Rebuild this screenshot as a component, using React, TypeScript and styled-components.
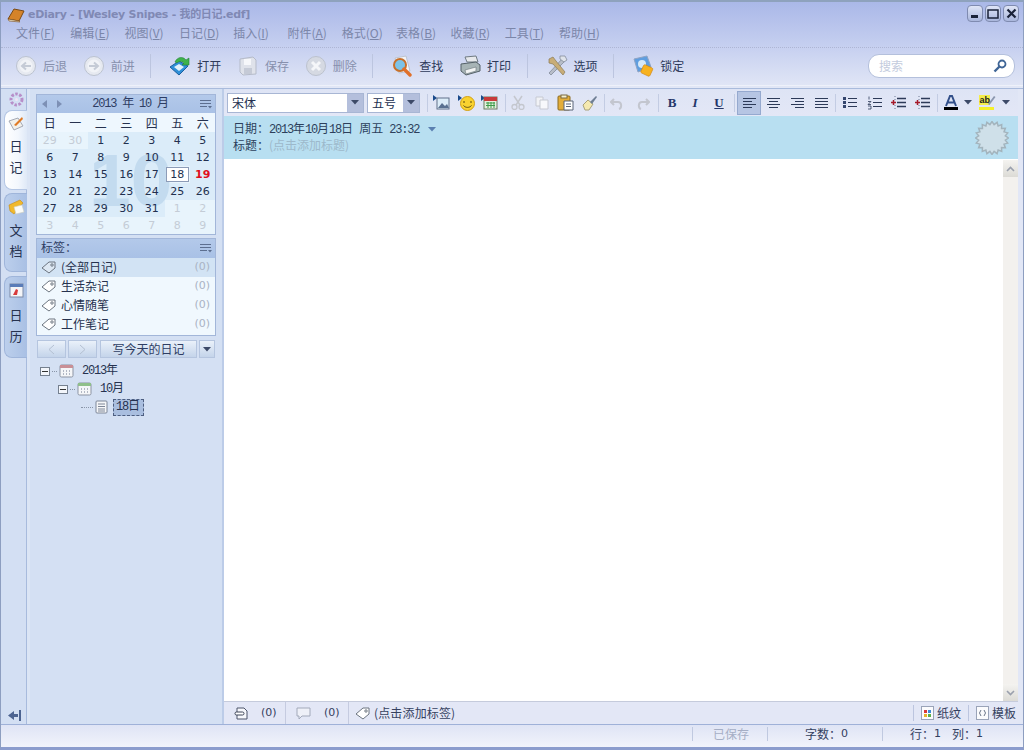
import React from "react";
import styled, { createGlobalStyle } from "styled-components";

const CJK = `"Noto Sans CJK SC", "Liberation Sans", sans-serif`;
const LATIN = `"DejaVu Sans", "Noto Sans CJK SC", sans-serif`;
const MONO = `"Liberation Mono", "Noto Sans CJK SC", monospace`;
const COLON = "\uFF1A";

const Global = createGlobalStyle`
  html, body { margin: 0; padding: 0; background: #fff; }
  * { box-sizing: border-box; }
`;

const S = {
  Window: styled.div`
    width: 1024px;
    height: 750px;
    display: flex;
    flex-direction: column;
    overflow: hidden;
    font: 12px/16px ${CJK};
    color: #2c3a5c;
    border: 1px solid #8d9ec0;
    border-top: 2px solid #8ea2bd;
    border-bottom: 3px solid #8b9ccd;
    background: linear-gradient(#aab8e8 0, #c3cdef 40px, #e2e7f6 86px, #e2e7f6 100%);
  `,
  Glyph: styled.svg`
    display: block;
    flex: none;
  `,
  TitleBar: styled.div`
    height: 23px;
    flex: none;
    display: flex;
    align-items: center;
    padding: 3px 4px 0 6px;
  `,
  Title: styled.div`
    margin-left: 3px;
    font: bold 11px/16px ${LATIN};
    letter-spacing: -0.3px;
    color: #8089b4;
  `,
  WinButtons: styled.div`
    margin-left: auto;
    margin-top: -3px;
    display: flex;
    gap: 2px;
  `,
  WinButton: styled.div`
    width: 16px;
    height: 17px;
    display: flex;
    align-items: center;
    justify-content: center;
    border: 1px solid #7f8bb0;
    border-radius: 4px;
    background: linear-gradient(#dfe5f7, #a9b6dc);
  `,
  MenuBar: styled.div`
    height: 23px;
    flex: none;
    display: flex;
    align-items: center;
    padding: 0 0 6px 15px;
    border-bottom: 1px dotted #aeb6d4;
  `,
  MenuItem: styled.div`
    width: 54.3px;
    flex: none;
    color: #7b86a9;
    u { text-underline-offset: 1px; }
  `,
  Toolbar: styled.div`
    height: 38px;
    flex: none;
    display: flex;
    align-items: center;
    padding: 0 0 2px 14px;
    border-bottom: 1px solid #eef1fa;
  `,
  ToolButton: styled.div<{ $off?: boolean }>`
    width: 67.67px;
    flex: none;
    display: flex;
    align-items: center;
    gap: 6px;
    color: ${(p) => (p.$off ? "#8790ad" : "#2e3a5a")};
  `,
  ToolSep: styled.div`
    width: 1px;
    height: 24px;
    flex: none;
    margin-right: 18px;
    background: #bcc5df;
  `,
  SearchBox: styled.div`
    margin-left: auto;
    margin-right: 8px;
    width: 147px;
    height: 24px;
    flex: none;
    display: flex;
    align-items: center;
    justify-content: space-between;
    padding: 0 7px 0 10px;
    color: #c3cbdd;
    background: #fff;
    border: 1px solid #b4c0dc;
    border-radius: 11px;
  `,
  Body: styled.div`
    height: 637px;
    flex: none;
    margin-top: 2px;
    display: flex;
    border-top: 1px solid #a9bbdc;
    border-bottom: 1px solid #9fb1d8;
  `,
  TabStrip: styled.div`
    width: 29px;
    flex: none;
    display: flex;
    flex-direction: column;
    align-items: flex-end;
    position: relative;
    background: #d3dff3;
    border-right: 3px solid #dbe5f5;
    box-shadow: inset -1px 0 0 #a8bbdd;
  `,
  Flower: styled.div`
    width: 24px;
    height: 21px;
    flex: none;
    display: flex;
    justify-content: center;
    align-items: center;
    margin-right: -1px;
  `,
  Tab: styled.div<{ $active?: boolean; $h: number; $mb: number }>`
    width: 23px;
    height: ${(p) => p.$h}px;
    flex: none;
    margin-bottom: ${(p) => p.$mb}px;
    padding-top: 1px;
    display: flex;
    flex-direction: column;
    align-items: center;
    font-size: 13px;
    line-height: 20.5px;
    border-radius: 8px 0 0 8px;
    border: 1px solid ${(p) => (p.$active ? "#b4c6e4" : "#9fb5da")};
    border-right: 0;
    background: ${(p) => (p.$active ? "linear-gradient(90deg,#fff,#f3f7fd 60%,#dfe9f7)" : "linear-gradient(90deg,#bccfec,#a9c0e4)")};
    color: #26324f;
  `,
  TabIcon: styled.div<{ $mb: number }>`
    height: 24px;
    flex: none;
    margin-bottom: ${(p) => p.$mb}px;
    display: flex;
    align-items: center;
  `,
  Collapse: styled.div`
    position: absolute;
    left: 7px;
    bottom: 3px;
  `,
  Side: styled.div`
    width: 194px;
    flex: none;
    padding: 5px 6px 0;
    background: #d4e0f3;
    border-right: 2px solid #bccce8;
  `,
  Calendar: styled.div`
    position: relative;
    height: 141px;
    overflow: hidden;
    border: 1px solid #a2b6d9;
    background: #e8f4fc;
  `,
  CalHeader: styled.div`
    height: 18px;
    display: flex;
    align-items: center;
    justify-content: center;
    position: relative;
    padding-left: 8px;
    font: 12px/16px ${MONO};
    letter-spacing: -1.2px;
    color: #2e3d63;
    background: linear-gradient(#b3c9ea, #a9c1e6);
  `,
  CalNav: styled.div`
    position: absolute;
    left: 5px;
    top: 0;
    bottom: 0;
    display: flex;
    align-items: center;
    gap: 8px;
  `,
  HeaderMenu: styled.div`
    position: absolute;
    right: 3px;
    top: 2px;
  `,
  CalGrid: styled.div`
    position: relative;
    display: grid;
    grid-template-columns: repeat(7, 25.5px);
    grid-template-rows: 19px repeat(6, 17px);
  `,
  WeekHead: styled.div`
    display: flex;
    align-items: center;
    justify-content: center;
    background: #eef7fe;
    color: #26324f;
  `,
  Day: styled.div<{ $muted?: boolean; $red?: boolean; $today?: boolean }>`
    position: relative;
    z-index: 1;
    display: flex;
    align-items: center;
    justify-content: center;
    font: ${(p) => (p.$red ? "bold " : "")}11px/15px ${LATIN};
    color: ${(p) => (p.$red ? "#e0101c" : p.$muted ? "#c4ccd6" : "#22304f")};
    background: ${(p) => (p.$muted ? "transparent" : "rgba(190, 220, 243, 0.3)")};
    ${(p) => p.$today && "background:#fff;box-shadow:inset 0 0 0 1px #8c9cb8;margin:1px 1.5px;"}
  `,
  Watermark: styled.div`
    position: absolute;
    z-index: 0;
    left: 52px;
    top: 38px;
    font: bold 75px/58px "Liberation Sans", sans-serif;
    color: #c6dcee;
    pointer-events: none;
  `,
  Tags: styled.div`
    margin-top: 3px;
    height: 98px;
    border: 1px solid #a2b6d9;
    background: #f0f8fe;
  `,
  TagsHead: styled.div`
    position: relative;
    height: 19px;
    padding: 0 4px;
    color: #2e3d63;
    background: linear-gradient(#b3c9ea, #a9c1e6);
  `,
  TagRow: styled.div<{ $sel?: boolean }>`
    height: 19px;
    display: flex;
    align-items: center;
    gap: 5px;
    padding: 0 5px 2px 4px;
    background: ${(p) => (p.$sel ? "#d2e3f4" : "transparent")};
    color: #26324f;
    em { margin-left: auto; font: 11px/14px ${LATIN}; color: #a9b3c4; font-style: normal; }
  `,
  NavRow: styled.div`
    margin-top: 4px;
    height: 18px;
    padding-left: 1px;
    display: flex;
  `,
  NavButton: styled.div<{ $w: number; $gap: number }>`
    width: ${(p) => p.$w}px;
    margin-right: ${(p) => p.$gap}px;
    flex: none;
    display: flex;
    align-items: center;
    justify-content: center;
    color: #2e3d63;
    border: 1px solid #b5c5df;
    background: linear-gradient(#eaf1fa, #c4d4ea);
  `,
  Tree: styled.div`
    margin-top: 4px;
    padding-left: 4px;
    color: #26324f;
  `,
  TreeRow: styled.div<{ $indent: number }>`
    height: 18px;
    display: flex;
    align-items: center;
    gap: 2px;
    padding-left: ${(p) => p.$indent}px;
  `,
  TreeLabel: styled.span<{ $sel?: boolean }>`
    margin-left: 3px;
    padding: 1px 5px 1px 3px;
    font: 12px/15px ${MONO};
    letter-spacing: -1.2px;
    ${(p) => p.$sel && "background:#a9bedf;outline:1px dashed #4d5e80;outline-offset:-1px;"}
  `,
  Expander: styled.div`
    width: 10px;
    height: 9px;
    flex: none;
    display: flex;
    align-items: center;
    justify-content: center;
    background: #f3f6fb;
    border: 1px solid #75808f;
    &::after { content: ""; width: 6px; height: 1px; background: #333; }
  `,
  Dots: styled.div<{ $w: number }>`
    width: ${(p) => p.$w}px;
    flex: none;
    border-top: 1px dotted #8995a8;
  `,
  Editor: styled.div`
    flex: 1;
    min-width: 0;
    display: flex;
    flex-direction: column;
    margin-right: 5px;
  `,
  FormatBar: styled.div`
    height: 27px;
    flex: none;
    display: flex;
    align-items: center;
    padding-left: 3px;
    background: linear-gradient(#dee4f5, #e3e7f6);
  `,
  Combo: styled.div<{ $w: number; $gap: number }>`
    width: ${(p) => p.$w}px;
    height: 20px;
    margin-right: ${(p) => p.$gap}px;
    flex: none;
    display: flex;
    align-items: center;
    justify-content: space-between;
    padding-left: 4px;
    background: #fff;
    border: 1px solid #a8b6d4;
    color: #22304f;
  `,
  ComboArrow: styled.div`
    width: 16px;
    height: 18px;
    display: flex;
    align-items: center;
    justify-content: center;
    background: #b4bfdc;
  `,
  FormatSep: styled.div<{ $before?: number; $after?: number }>`
    width: 1px;
    height: 18px;
    flex: none;
    margin-left: ${(p) => p.$before ?? 0}px;
    margin-right: ${(p) => p.$after ?? 0}px;
    background: #c3cce3;
  `,
  FormatBtn: styled.div<{ $w?: number; $on?: boolean }>`
    width: ${(p) => p.$w ?? 24}px;
    height: 24px;
    flex: none;
    display: flex;
    align-items: center;
    justify-content: center;
    font: bold 13px/16px "Liberation Serif", serif;
    color: #25376a;
    ${(p) => p.$on && "background:#b6c5e3;box-shadow:inset 0 0 0 1px #95a9cf;"}
  `,
  DateBand: styled.div`
    height: 43px;
    flex: none;
    position: relative;
    padding: 5px 9px;
    color: #2c3f5c;
    background: #b8dff1;
  `,
  DateRow: styled.div`
    height: 16px;
    display: flex;
    align-items: center;
    gap: 9px;
  `,
  Num: styled.span`
    font-family: ${MONO};
    letter-spacing: -1.2px;
  `,
  Hint: styled.span`
    color: #9db9cb;
  `,
  Seal: styled.div`
    position: absolute;
    right: 9px;
    top: 5px;
  `,
  Page: styled.div`
    flex: 1;
    min-height: 0;
    display: flex;
    justify-content: flex-end;
    background: #fff;
    border-bottom: 1px solid #c5cbdc;
  `,
  Scroll: styled.div`
    width: 15px;
    display: flex;
    flex-direction: column;
    justify-content: space-between;
    margin-top: 1px;
    background: #f3f1ee;
  `,
  ScrollBtn: styled.div`
    height: 17px;
    display: flex;
    align-items: center;
    justify-content: center;
    background: linear-gradient(#f4f3f0, #dcdbd6);
  `,
  BottomBar: styled.div`
    height: 22px;
    flex: none;
    display: flex;
    align-items: center;
    background: #e3e7f6;
    color: #35415f;
  `,
  BottomCell: styled.div<{ $w: number; $pad: number; $line?: boolean }>`
    width: ${(p) => p.$w}px;
    height: 100%;
    flex: none;
    display: flex;
    align-items: center;
    gap: 13px;
    padding-left: ${(p) => p.$pad}px;
    border-right: ${(p) => (p.$line ? "1px solid #c5cbe0" : "0")};
    font: 11px/14px ${LATIN};
  `,
  HintTag: styled.span`
    margin-left: -9px;
    font-family: ${CJK};
    font-size: 12px;
    letter-spacing: 0.15px;
  `,
  BottomRight: styled.div`
    margin-left: auto;
    display: flex;
    align-items: center;
    gap: 3px;
    margin-right: 2px;
  `,
  BottomSep: styled.div`
    width: 1px;
    height: 16px;
    margin: 0 4px;
    background: #bcc5df;
  `,
  StatusBar: styled.div`
    flex: 1;
    display: flex;
    align-items: center;
    padding: 0 0 4px 691px;
    background: linear-gradient(#dfe4f5, #f1f3fb);
  `,
  StatusCell: styled.div<{ $w: number; $off?: boolean; $pad: number }>`
    width: ${(p) => p.$w}px;
    height: 14px;
    flex: none;
    display: flex;
    align-items: center;
    padding-left: ${(p) => p.$pad}px;
    border-left: 1px solid #c0c9e0;
    color: ${(p) => (p.$off ? "#a5aec5" : "#33405f")};
    b { font: 11px/14px ${LATIN}; }
    i { width: 11px; flex: none; }
  `,
};

const Svg = ({ w = 16, h = 16, children }: { w?: number; h?: number; children: React.ReactNode }) => (
  <S.Glyph width={w} height={h} viewBox={`0 0 ${w} ${h}`}>
    {children}
  </S.Glyph>
);

const RoundArrow = ({ flip }: { flip?: boolean }) => (
  <Svg w={22} h={22}>
    <circle cx="11" cy="11" r="9.5" fill="#e6e9f0" stroke="#bcc3d0" />
    <circle cx="11" cy="11" r="6.5" fill="#f1f3f7" />
    <path d={flip ? "M6 11h8M11 7.5l4 3.5-4 3.5" : "M16 11H8M11 7.5L7 11l4 3.5"} fill="none" stroke="#c5cbd6" strokeWidth="2" />
  </Svg>
);

const OpenIcon = () => (
  <Svg w={22} h={22}>
    <path d="M1 12l9-6 9 5-9 9z" fill="#2e8fd8" stroke="#1b5f9e" />
    <path d="M5 12l5-3 5 3-5 4z" fill="#dff0fb" />
    <path d="M6 7c2-5 8-6 11-2l3-2v7h-7l2-2c-2-2-5-2-7 0z" fill="#3eb34a" stroke="#23803a" strokeWidth=".6" />
  </Svg>
);

const SaveIcon = () => (
  <Svg w={22} h={22}>
    <path d="M3 4l13-2 3 3v14l-13 1-3-3z" fill="#dfe2ea" stroke="#b5bbc9" />
    <rect x="7" y="4" width="7" height="6" fill="#f6f7fa" />
    <rect x="7" y="13" width="8" height="6" fill="#c5cad6" />
  </Svg>
);

const DeleteIcon = () => (
  <Svg w={22} h={22}>
    <circle cx="11" cy="11" r="9.5" fill="#d5d9e2" stroke="#bcc2ce" />
    <path d="M7 7l8 8M15 7l-8 8" stroke="#f5f6f9" strokeWidth="3" />
  </Svg>
);

const FindIcon = () => (
  <Svg w={22} h={22}>
    <path d="M4 3l11-2 4 15-11 2z" fill="#f3f3f6" stroke="#bdc3d0" />
    <circle cx="9" cy="10" r="6" fill="#7cc3e8" stroke="#c7702a" strokeWidth="2" />
    <path d="M13 14l6 6" stroke="#e0702a" strokeWidth="3.4" strokeLinecap="round" />
  </Svg>
);

const PrintIcon = () => (
  <Svg w={22} h={22}>
    <path d="M6 2l11-1 2 6H8z" fill="#e7e9ec" stroke="#6f7a82" />
    <path d="M2 9l15-2 4 3v6l-14 4-5-4z" fill="#a7b4b6" stroke="#556168" />
    <path d="M6 15l11-3v4l-10 3z" fill="#f1f3f3" stroke="#687379" strokeWidth=".6" />
  </Svg>
);

const OptionsIcon = () => (
  <Svg w={22} h={22}>
    <path d="M17 3l-14 15 2 2L19 6z" fill="#b7bdc8" stroke="#7a8290" strokeWidth=".7" />
    <path d="M3 4l4-2 3 4 9 11-2 3L7 9 3 8z" fill="#c8ad78" stroke="#8a7a55" strokeWidth=".7" />
    <path d="M14 1h5l2 4-3 2-4-3z" fill="#dfe3ea" stroke="#7a8290" strokeWidth=".7" />
  </Svg>
);

const LockIcon = () => (
  <Svg w={22} h={22}>
    <path d="M2 4l13-3 4 11-13 5z" fill="#5f9ee0" stroke="#8fa4c4" />
    <circle cx="10" cy="9" r="4" fill="#d5e8f8" />
    <rect x="10" y="11" width="10" height="9" rx="1.5" transform="rotate(25 15 15)" fill="#f7b21f" stroke="#d08410" strokeWidth=".6" />
  </Svg>
);

const HeaderMenuIcon = () => (
  <Svg w={13} h={13}>
    <path d="M1 3.5h11M1 6.5h11M1 9.5h7" stroke="#5d6f90" />
    <path d="M9 9h4l-2 2.500z" fill="#5d6f90" />
  </Svg>
);

const TagIcon = ({ sel }: { sel?: boolean }) => (
  <Svg w={15} h={14}>
    <path d="M1 8l7-6h6v6l-6 5z" fill={sel ? "#dde8f3" : "#fff"} stroke="#6c7580" />
    <circle cx="11" cy="5" r="1.200" fill="none" stroke="#6c7580" />
  </Svg>
);

const CalIcon = ({ tint }: { tint: string }) => (
  <Svg w={15} h={14}>
    <rect x="1" y="1" width="13" height="12" rx="1.500" fill="#f5f6f8" stroke="#8b93a3" />
    <rect x="1" y="1" width="13" height="3" fill={tint} />
    <path d="M4 7h1M7 7h1M10 7h1M4 10h1M7 10h1M10 10h1" stroke="#6e7890" />
  </Svg>
);

const DocIcon = () => (
  <Svg w={13} h={14}>
    <rect x="1" y="1" width="11" height="12" rx="1" fill="#f5f6f8" stroke="#7d8697" />
    <path d="M3 4h7M3 6.500h7M3 9h7M3 11h7" stroke="#7d8697" />
  </Svg>
);

const DownArrow = ({ color = "#3d4a68" }: { color?: string }) => (
  <Svg w={8} h={5}>
    <path d="M0 0h8L4 4.500z" fill={color} />
  </Svg>
);

const Lines = ({ mode }: { mode: "left" | "center" | "right" | "full" }) => {
  const long = "M1 3.500h13M1 9.500h13";
  const short = { left: "M1 6.500h9M1 12.500h9", center: "M3 6.500h9M3 12.500h9", right: "M5 6.500h9M5 12.500h9", full: "M1 6.500h13M1 12.500h13" }[mode];
  return (
    <Svg w={15} h={15}>
      <path d={long + short} stroke="#2c3a58" strokeWidth="1.200" />
    </Svg>
  );
};

const BulletList = ({ numbered }: { numbered?: boolean }) => (
  <Svg w={15} h={15}>
    <path d="M6 3.500h9M6 7.500h9M6 11.500h9" stroke="#2c3a58" />
    {numbered ? (
      <path d="M2 1.500v3M1 6.500h3l-3 3h3M1 11h3M1 14h3M4 11v3" stroke="#2c3a58" strokeWidth=".8" fill="none" />
    ) : (
      <path d="M1 2h3v3H1zM1 6h3v3H1zM1 10h3v3H1z" fill="#34466e" />
    )}
  </Svg>
);

const Indent = () => (
  <Svg w={17} h={15}>
    <path d="M7 3.500h9M7 7.500h9M7 11.500h9" stroke="#2c3a58" strokeWidth="1.300" />
    <path d="M5 1v14" stroke="#6b7690" strokeDasharray="1 2" />
    <path d="M1 7.500h5M3.500 5v5" stroke="#a51a2a" strokeWidth="1.500" />
  </Svg>
);

// spiky stamp at the right of the date band
const sealPoints = Array.from({ length: 40 }, (_, i) => {
  const r = i % 2 ? 13.5 : 16.5;
  const a = (i * Math.PI) / 20;
  return `${17 + r * Math.cos(a)},${17 + r * Math.sin(a)}`;
}).join(" ");

const menus: [string, string][] = [
  ["文件", "F"], ["编辑", "E"], ["视图", "V"], ["日记", "D"], ["插入", "I"], ["附件", "A"],
  ["格式", "O"], ["表格", "B"], ["收藏", "R"], ["工具", "T"], ["帮助", "H"],
];

const weekDays = ["日", "一", "二", "三", "四", "五", "六"];
const days: number[] = [
  29, 30, 1, 2, 3, 4, 5, 6, 7, 8, 9, 10, 11, 12, 13, 14, 15, 16, 17, 18, 19,
  20, 21, 22, 23, 24, 25, 26, 27, 28, 29, 30, 31, 1, 2, 3, 4, 5, 6, 7, 8, 9,
];

const tags = ["生活杂记", "心情随笔", "工作笔记"];

export default function App() {
  return (
    <S.Window>
      <Global />
      <S.TitleBar>
        <Svg w={18} h={16}>
          <path d="M1 12L7 2l10 2-5 10z" fill="#d5832a" stroke="#7a4a14" />
          <path d="M1 12l11 2 1 1-11-1z" fill="#f0e5c8" stroke="#7a4a14" strokeWidth=".6" />
        </Svg>
        <S.Title>eDiary - [Wesley Snipes - 我的日记.edf]</S.Title>
        <S.WinButtons>
          <S.WinButton>
            <Svg w={10} h={10}><rect x="1" y="6" width="7" height="3" fill="#1a2238" /></Svg>
          </S.WinButton>
          <S.WinButton>
            <Svg w={12} h={10}><rect x="1" y="1" width="10" height="8" fill="none" stroke="#1a2238" strokeWidth="1.500" /></Svg>
          </S.WinButton>
          <S.WinButton>
            <Svg w={11} h={11}><path d="M1.500 1.500l8 8M9.500 1.500l-8 8" stroke="#1a2238" strokeWidth="2.200" /></Svg>
          </S.WinButton>
        </S.WinButtons>
      </S.TitleBar>

      <S.MenuBar>
        {menus.map(([name, key]) => (
          <S.MenuItem key={key}>
            {name}(<u>{key}</u>)
          </S.MenuItem>
        ))}
      </S.MenuBar>

      <S.Toolbar>
        <S.ToolButton $off><RoundArrow /><span>后退</span></S.ToolButton>
        <S.ToolButton $off><RoundArrow flip /><span>前进</span></S.ToolButton>
        <S.ToolSep />
        <S.ToolButton><OpenIcon /><span>打开</span></S.ToolButton>
        <S.ToolButton $off><SaveIcon /><span>保存</span></S.ToolButton>
        <S.ToolButton $off><DeleteIcon /><span>删除</span></S.ToolButton>
        <S.ToolSep />
        <S.ToolButton><FindIcon /><span>查找</span></S.ToolButton>
        <S.ToolButton><PrintIcon /><span>打印</span></S.ToolButton>
        <S.ToolSep />
        <S.ToolButton><OptionsIcon /><span>选项</span></S.ToolButton>
        <S.ToolSep />
        <S.ToolButton><LockIcon /><span>锁定</span></S.ToolButton>
        <S.SearchBox>
          搜索
          <Svg w={14} h={14}>
            <circle cx="9" cy="5" r="3.500" fill="none" stroke="#3f6596" strokeWidth="1.800" />
            <path d="M6.500 7.500L1.500 12.500" stroke="#3f6596" strokeWidth="2.400" />
          </Svg>
        </S.SearchBox>
      </S.Toolbar>

      <S.Body>
        <S.TabStrip>
          <S.Flower>
            <Svg w={15} h={15}>
              <circle cx="7.500" cy="7.500" r="5.500" fill="none" stroke="#b78fc9" strokeWidth="3" strokeDasharray="2.500 1.500" />
              <circle cx="7.500" cy="7.500" r="1.500" fill="#f0e4f5" />
            </Svg>
          </S.Flower>
          <S.Tab $active $h={80} $mb={3}>
            <S.TabIcon $mb={0}>
              <Svg w={16} h={16}>
                <path d="M1 5l9-3 5 8-9 4z" fill="#f2f0ea" stroke="#a4a9b5" />
                <path d="M6 9l8-8 1 2-7 7z" fill="#e07a24" />
              </Svg>
            </S.TabIcon>
            <span>日</span>
            <span>记</span>
          </S.Tab>
          <S.Tab $h={79} $mb={4}>
            <S.TabIcon $mb={1}>
              <Svg w={17} h={16}>
                <path d="M1 6l11-5 3 3-9 11-4-3z" fill="#f1b92c" stroke="#c48a15" strokeWidth=".6" />
                <path d="M6 8l8-2 2 7-8 2z" fill="#fbfbf6" stroke="#cfcfc0" strokeWidth=".6" />
              </Svg>
            </S.TabIcon>
            <span>文</span>
            <span>档</span>
          </S.Tab>
          <S.Tab $h={82} $mb={0}>
            <S.TabIcon $mb={3}>
              <Svg w={15} h={16}>
                <rect x="1" y="2" width="13" height="13" fill="#f4f5f8" stroke="#7d8aa6" />
                <rect x="1" y="2" width="13" height="3" fill="#5a7cb8" />
                <path d="M4 13l3-6 2 1-1 5z" fill="#d83a3a" />
              </Svg>
            </S.TabIcon>
            <span>日</span>
            <span>历</span>
          </S.Tab>
          <S.Collapse>
            <Svg w={14} h={11}>
              <path d="M0 5.500L6 1v3h4v3H6v3z" fill="#4d6491" />
              <rect x="11" y="0" width="2" height="11" fill="#4d6491" />
            </Svg>
          </S.Collapse>
        </S.TabStrip>

        <S.Side>
          <S.Calendar>
            <S.CalHeader>
              <S.CalNav>
                <Svg w={6} h={8}><path d="M5 0v8L0 4z" fill="#7d90b5" /></Svg>
                <Svg w={6} h={8}><path d="M1 0v8l5-4z" fill="#7d90b5" /></Svg>
              </S.CalNav>
              2013 年 10 月
              <S.HeaderMenu><HeaderMenuIcon /></S.HeaderMenu>
            </S.CalHeader>
            <S.CalGrid>
              {weekDays.map((d) => (
                <S.WeekHead key={d}>{d}</S.WeekHead>
              ))}
              {days.map((d, i) => (
                <S.Day key={i} $muted={i < 2 || i > 32} $today={i === 19} $red={i === 20}>
                  {d}
                </S.Day>
              ))}
              <S.Watermark>10</S.Watermark>
            </S.CalGrid>
          </S.Calendar>

          <S.Tags>
            <S.TagsHead>
              标签{COLON}
              <S.HeaderMenu><HeaderMenuIcon /></S.HeaderMenu>
            </S.TagsHead>
            <S.TagRow $sel>
              <TagIcon sel />
              (全部日记)
              <em>(0)</em>
            </S.TagRow>
            {tags.map((t) => (
              <S.TagRow key={t}>
                <TagIcon />
                {t}
                <em>(0)</em>
              </S.TagRow>
            ))}
          </S.Tags>

          <S.NavRow>
            <S.NavButton $w={29} $gap={2}>
              <Svg w={7} h={11}><path d="M6 1L1 5.500 6 10" fill="none" stroke="#b4c0d2" /></Svg>
            </S.NavButton>
            <S.NavButton $w={29} $gap={3}>
              <Svg w={7} h={11}><path d="M1 1l5 4.500L1 10" fill="none" stroke="#b4c0d2" /></Svg>
            </S.NavButton>
            <S.NavButton $w={97} $gap={2}>写今天的日记</S.NavButton>
            <S.NavButton $w={16} $gap={0}><DownArrow /></S.NavButton>
          </S.NavRow>

          <S.Tree>
            <S.TreeRow $indent={0}>
              <S.Expander /><S.Dots $w={5} /><CalIcon tint="#c98f96" /><S.TreeLabel>2013年</S.TreeLabel>
            </S.TreeRow>
            <S.TreeRow $indent={18}>
              <S.Expander /><S.Dots $w={5} /><CalIcon tint="#8fbf8a" /><S.TreeLabel>10月</S.TreeLabel>
            </S.TreeRow>
            <S.TreeRow $indent={41}>
              <S.Dots $w={12} /><DocIcon /><S.TreeLabel $sel>18日</S.TreeLabel>
            </S.TreeRow>
          </S.Tree>
        </S.Side>

        <S.Editor>
          <S.FormatBar>
            <S.Combo $w={137} $gap={3}>宋体<S.ComboArrow><DownArrow /></S.ComboArrow></S.Combo>
            <S.Combo $w={53} $gap={7}>五号<S.ComboArrow><DownArrow /></S.ComboArrow></S.Combo>
            <S.FormatSep />
            <S.FormatBtn $w={26}>
              <Svg w={17} h={15}>
                <path d="M0 0l4 3-4 3z" fill="#1a4a8a" />
                <rect x="4" y="3" width="12" height="11" fill="#dcecf8" stroke="#60708a" />
                <path d="M5 13l4-5 3 3 2-2 2 4z" fill="#5a7090" />
              </Svg>
            </S.FormatBtn>
            <S.FormatBtn>
              <Svg w={17} h={17}>
                <path d="M0 1l4 3-4 3z" fill="#1a4a8a" />
                <circle cx="9.500" cy="9.500" r="7" fill="#f9d22f" stroke="#d3a012" />
                <path d="M6 7v2M13 7v2" stroke="#5a4a10" />
                <path d="M5.500 11.500c2 2.500 6 2.500 8 0" fill="none" stroke="#5a4a10" />
              </Svg>
            </S.FormatBtn>
            <S.FormatBtn $w={23}>
              <Svg w={17} h={15}>
                <path d="M0 0l4 3-4 3z" fill="#1a4a8a" />
                <rect x="3" y="2" width="13" height="12" fill="#e4f0dd" stroke="#6a7a60" />
                <rect x="3" y="2" width="13" height="4" fill="#c83a3a" />
                <path d="M5 8h9M5 10.500h9M7 7v6M10 7v6M13 7v6" stroke="#3f9a4a" />
              </Svg>
            </S.FormatBtn>
            <S.FormatSep $before={4} />
            <S.FormatBtn>
              <Svg w={14} h={15}>
                <path d="M3 1l6 9M11 1L5 10" stroke="#c4c7ce" strokeWidth="1.500" />
                <circle cx="3.500" cy="12" r="2.500" fill="none" stroke="#c4c7ce" strokeWidth="1.300" />
                <circle cx="10.500" cy="12" r="2.500" fill="none" stroke="#c4c7ce" strokeWidth="1.300" />
              </Svg>
            </S.FormatBtn>
            <S.FormatBtn>
              <Svg w={14} h={14}>
                <path d="M1 1h7v9H1z" fill="#f1f2f6" stroke="#c6c9d2" />
                <path d="M5 4h8v9H5z" fill="#f7f8fb" stroke="#c6c9d2" />
              </Svg>
            </S.FormatBtn>
            <S.FormatBtn $w={23}>
              <Svg w={17} h={17}>
                <rect x="1" y="2" width="12" height="14" rx="1" fill="#e3ad3a" stroke="#8a6a20" />
                <rect x="4" y="1" width="6" height="3" fill="#f5efcf" stroke="#7a6a40" />
                <path d="M7 7h9v9H7z" fill="#fff" stroke="#5a6478" />
                <path d="M9 10h5M9 12.500h5" stroke="#5a6478" />
              </Svg>
            </S.FormatBtn>
            <S.FormatBtn $w={26}>
              <Svg w={16} h={16}>
                <path d="M1 10l5-5 5 4-4 6H3z" fill="#f5e9b0" stroke="#a9a27a" />
                <path d="M8 7l6-6 1 1-5 7z" fill="#6f7f94" />
              </Svg>
            </S.FormatBtn>
            <S.FormatSep $before={1} />
            <S.FormatBtn>
              <Svg w={14} h={14}>
                <path d="M4 3L1 6l3 3M1.500 6H8c4 0 4 6 1 7" fill="none" stroke="#c3c6cf" strokeWidth="2" />
              </Svg>
            </S.FormatBtn>
            <S.FormatBtn $w={28}>
              <Svg w={14} h={14}>
                <path d="M10 3l3 3-3 3M12.500 6H6c-4 0-4 6-1 7" fill="none" stroke="#c3c6cf" strokeWidth="2" />
              </Svg>
            </S.FormatBtn>
            <S.FormatSep $before={1} />
            <S.FormatBtn $w={26}>B</S.FormatBtn>
            <S.FormatBtn $w={20}><i>I</i></S.FormatBtn>
            <S.FormatBtn $w={28}><u>U</u></S.FormatBtn>
            <S.FormatSep $before={1} $after={2} />
            <S.FormatBtn $on><Lines mode="left" /></S.FormatBtn>
            <S.FormatBtn><Lines mode="center" /></S.FormatBtn>
            <S.FormatBtn><Lines mode="right" /></S.FormatBtn>
            <S.FormatBtn><Lines mode="full" /></S.FormatBtn>
            <S.FormatSep $before={2} />
            <S.FormatBtn $w={26}><BulletList /></S.FormatBtn>
            <S.FormatBtn><BulletList numbered /></S.FormatBtn>
            <S.FormatBtn><Indent /></S.FormatBtn>
            <S.FormatBtn><Indent /></S.FormatBtn>
            <S.FormatSep $before={3} />
            <S.FormatBtn $w={26}>
              <Svg w={16} h={17}>
                <path d="M3 12L7 2h2l4 10M5 8.500h6" fill="none" stroke="#33508a" strokeWidth="2" />
                <rect x="1" y="13" width="14" height="3" fill="#000" />
              </Svg>
            </S.FormatBtn>
            <S.FormatBtn $w={8}><DownArrow /></S.FormatBtn>
            <S.FormatBtn $w={30}>
              <Svg w={17} h={17}>
                <rect x="0" y="1" width="11" height="10" fill="#f5ee4a" />
                <path d="M9 10l6-8 1.500 1-6 8z" fill="#8a96ae" />
                <rect x="0" y="13" width="15" height="3" fill="#f5f02a" />
                <text x="0.500" y="9" fontSize="9" fontFamily="Liberation Sans" fill="#222">ab</text>
              </Svg>
            </S.FormatBtn>
            <S.FormatBtn $w={8}><DownArrow /></S.FormatBtn>
          </S.FormatBar>

          <S.DateBand>
            <S.DateRow>
              <span>
                日期{COLON}<S.Num>2013</S.Num>年<S.Num>10</S.Num>月<S.Num>18</S.Num>日<S.Num> </S.Num>周五<S.Num> 23:32</S.Num>
              </span>
              <DownArrow color="#5a7fb0" />
            </S.DateRow>
            <S.DateRow>
              <span>标题{COLON}<S.Hint>(点击添加标题)</S.Hint></span>
            </S.DateRow>
            <S.Seal>
              <Svg w={34} h={34}>
                <polygon points={sealPoints} fill="#cfe0e9" stroke="#a3b4bd" strokeWidth="1.500" />
              </Svg>
            </S.Seal>
          </S.DateBand>

          <S.Page>
            <S.Scroll>
              <S.ScrollBtn>
                <Svg w={9} h={6}><path d="M1 5l3.500-3.500L8 5" fill="none" stroke="#9aa0ad" strokeWidth="1.600" /></Svg>
              </S.ScrollBtn>
              <S.ScrollBtn>
                <Svg w={9} h={6}><path d="M1 1l3.500 3.500L8 1" fill="none" stroke="#9aa0ad" strokeWidth="1.600" /></Svg>
              </S.ScrollBtn>
            </S.Scroll>
          </S.Page>

          <S.BottomBar>
            <S.BottomCell $w={62} $pad={10} $line>
              <Svg w={14} h={13}>
                <path d="M3 1h7l3 3v8H3z" fill="#f7f8fc" stroke="#4c556b" />
                <rect x="1" y="5" width="9" height="3" rx="1.500" fill="#fff" stroke="#3c4558" />
              </Svg>
              (0)
            </S.BottomCell>
            <S.BottomCell $w={63} $pad={10} $line>
              <Svg w={15} h={13}>
                <path d="M1 1h13v8H6l-3 3V9H1z" fill="#eef0f8" stroke="#a2a9ba" />
              </Svg>
              (0)
            </S.BottomCell>
            <S.BottomCell $w={120} $pad={6}>
              <TagIcon />
              <S.HintTag>(点击添加标签)</S.HintTag>
            </S.BottomCell>
            <S.BottomRight>
              <S.BottomSep />
              <Svg w={13} h={14}>
                <rect x=".5" y=".5" width="12" height="13" fill="#fbfbfd" stroke="#9aa3b8" />
                <rect x="3" y="4" width="3" height="3" fill="#d83a3a" />
                <rect x="7" y="4" width="3" height="3" fill="#3a8ad8" />
                <rect x="3" y="8" width="3" height="3" fill="#e8b32a" />
                <rect x="7" y="8" width="3" height="3" fill="#5ab04a" />
              </Svg>
              纸纹
              <S.BottomSep />
              <Svg w={13} h={14}>
                <rect x=".5" y=".5" width="12" height="13" fill="#fbfbfd" stroke="#9aa3b8" />
                <path d="M5 4L3.500 7 5 10M8 4l1.500 3L8 10" fill="none" stroke="#6a7488" />
              </Svg>
              模板
            </S.BottomRight>
          </S.BottomBar>
        </S.Editor>
      </S.Body>

      <S.StatusBar>
        <S.StatusCell $w={75} $pad={20} $off>已保存</S.StatusCell>
        <S.StatusCell $w={115} $pad={37}>字数{COLON}<b>0</b></S.StatusCell>
        <S.StatusCell $w={100} $pad={27}>行{COLON}<b>1</b><i />列{COLON}<b>1</b></S.StatusCell>
      </S.StatusBar>
    </S.Window>
  );
}
